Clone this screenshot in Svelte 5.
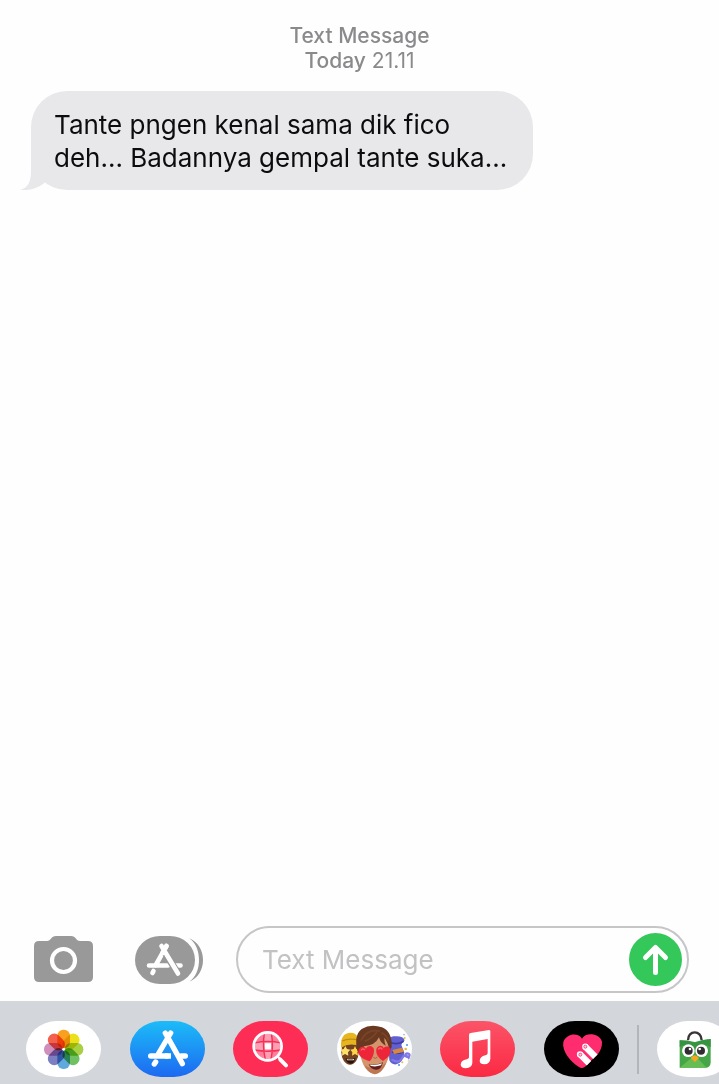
<script>
  let draft = $state('');

  const petals = ['#f9a01f', '#ece01a', '#a9d045', '#6fc163', '#5fa9dc', '#7d80c0', '#cf8fbd', '#f4604e'];
</script>

<main class="screen">
  <section class="thread" aria-label="Conversation">
    <header class="stamp">
      <div class="kind">Text Message</div>
      <div><span class="kind">Today</span> 21.11</div>
    </header>

    <div class="bubble">
      <svg class="tail" viewBox="0 0 40 40" aria-hidden="true">
        <path d="M11 0V21C11 32 8 38 0 40C9 41 18 38 23 34L40 20V0Z" fill="#e8e8ea" />
      </svg>
      <p>Tante pngen kenal sama dik fico<br />deh... Badannya gempal tante suka...</p>
    </div>
  </section>

  <form class="composer" onsubmit={(e) => e.preventDefault()}>
    <button type="button" class="tool" aria-label="Camera">
      <svg width="59" height="47" viewBox="0 0 59 47">
        <path
          d="M5 5H13C17 5 17 0 22 0H37C42 0 42 5 46 5H54Q59 5 59 10V41Q59 46 54 46H5Q0 46 0 41V10Q0 5 5 5Z"
          fill="#999"
        />
        <circle cx="29.5" cy="24.5" r="11.5" fill="none" stroke="#fff" stroke-width="4.2" />
      </svg>
    </button>

    <button type="button" class="tool" aria-label="Apps">
      <svg width="68" height="48" viewBox="0 0 68 48">
        <rect width="60" height="48" rx="25" ry="24" fill="#999" />
        <path d="M54 2C63 6 68 14 68 24S63 42 54 46C61 41 64 33 64 24S61 7 54 2Z" fill="#999" />
        <g fill="none" stroke="#fff" stroke-width="4.600" stroke-linecap="round">
          <path d="M31.500 10L20.500 29.500M14 29.500H33M41 29.500H45.500M18.500 35L17.500 37" />
          <path d="M29 15L43 37.500" stroke="#999" stroke-width="7" stroke-linecap="butt" />
          <path d="M31.500 10L27.500 17M26.500 10L43 37.500" />
        </g>
      </svg>
    </button>

    <div class="field">
      <input type="text" placeholder="Text Message" aria-label="Text Message" bind:value={draft} />
      <button type="submit" class="send" aria-label="Send">
        <svg width="53" height="53" viewBox="0 0 53 53">
          <circle cx="26.5" cy="26.5" r="26.500" fill="#34c759" />
          <path
            d="M26.500 39.500V15M16.500 24.500L26.500 14.500L36.500 24.500"
            fill="none"
            stroke="#fff"
            stroke-width="5"
            stroke-linecap="round"
            stroke-linejoin="round"
          />
        </svg>
      </button>
    </div>
  </form>

  <nav class="shelf" aria-label="Message apps">
    <div class="apps">
      <button class="app photos" aria-label="Photos">
        <svg viewBox="47 48 225 168">
          <g transform="translate(160 133)">
            {#each petals as color, i}
              <rect
                class="petal"
                x="-19"
                y="-59"
                width="38"
                height="56"
                rx="18"
                fill={color}
                transform="rotate({i * 45})"
              />
            {/each}
            <circle r="4" fill="#fff" />
          </g>
        </svg>
      </button>

      <button class="app store" aria-label="App Store">
        <svg viewBox="357 48 225 168">
          <g fill="none" stroke="#fff" stroke-width="16" stroke-linecap="round">
            <path d="M479 84L440 150M419 153H468M511 153H523M434 171L430 177" />
            <path d="M463 84L514 176" />
            <path d="M462 153H480" stroke-linecap="butt" />
          </g>
        </svg>
      </button>

      <button class="app images" aria-label="Image search">
        <svg viewBox="39 48 225 168">
          <circle cx="143" cy="124" r="41" fill="#ff9fb4" />
          <path d="M108 108H131V84H120ZM157 84V108H178L168 92ZM108 138H131V162H120ZM157 138H178L166 158L157 162Z" fill="#ff7e99" />
          <path d="M134 115H153V133H134Z" fill="#fff" />
          <path d="M133 84Q127 124 136 164M154 84Q161 124 153 164M104 113Q143 106 183 113M104 135Q143 142 183 135" fill="none" stroke="#f92e55" stroke-width="4.500" />
          <circle cx="143" cy="124" r="42" fill="none" stroke="#fff" stroke-width="8" />
          <path d="M173 155L182 163" stroke="#fff" stroke-width="7" />
          <path d="M181 164L198 181" stroke="#fff" stroke-width="12" stroke-linecap="round" />
        </svg>
      </button>

      <button class="app memoji" aria-label="Memoji">
        <svg viewBox="36 33 225 168">
          <ellipse cx="75" cy="126" rx="26" ry="38" fill="#734322" />
          <path d="M48 113Q45 68 78 68Q104 70 104 108L92 105Q69 100 48 113Z" fill="#e7b51f" />
          <path d="M51 93Q71 84 101 90" fill="none" stroke="#c28b12" stroke-width="4" />
          <path d="M61 108L66 117L76 119L69 127L70 137L60 132L51 137L52 127L46 119L56 117Z" fill="#ffe06a" />
          <path d="M90 108L94 117L102 119L97 127L99 137L90 132L81 137L82 127L76 119L86 117Z" fill="#ffd247" />
          <path d="M61 145Q76 152 91 143Q88 162 75 161Q65 160 61 145Z" fill="#28140d" />
          <path d="M65 147Q77 151 88 146L86 151H67Z" fill="#fff" />

          <path d="M190 103Q188 81 205 79Q235 76 239 91Q232 98 229 105L238 128Q234 158 214 163Q199 165 193 151Z" fill="#625fd0" />
          <path d="M193 96Q215 107 236 94M201 126Q219 133 235 125" fill="none" stroke="#3e3a9f" stroke-width="5" />
          <path d="M202 120L231 113L237 126L207 132Z" fill="#d7873e" />
          <path d="M202 150Q223 161 231 145T251 143Q258 130 246 130Q238 132 244 140" fill="none" stroke="#8278e6" stroke-width="7" stroke-linecap="round" />
          <g fill="#edbc35">
            <circle cx="239" cy="84" r="3" /><circle cx="242" cy="117" r="4" /><circle cx="232" cy="157" r="3" /><circle cx="250" cy="153" r="2" />
          </g>
          <g fill="#4b91df">
            <circle cx="246" cy="105" r="3" /><circle cx="222" cy="165" r="3" /><circle cx="237" cy="74" r="2" />
          </g>

          <path d="M104 83Q142 61 193 86Q199 132 184 160Q170 191 150 193Q127 190 114 162Q100 130 104 83Z" fill="#d4946c" />
          <path d="M118 166Q147 187 184 158Q170 190 150 193Q130 190 118 166Z" fill="#bd7853" />
          <path d="M97 122Q86 76 110 57Q137 40 171 52Q202 64 200 112L193 122Q190 98 178 83Q178 99 182 107Q166 99 162 82Q151 106 117 109Q110 117 110 132L101 128Z" fill="#683920" />
          <path d="M109 90Q124 57 163 63M121 93Q141 86 155 67M171 69Q186 77 190 91" fill="none" stroke="#7a4527" stroke-width="5" stroke-linecap="round" />
          <path d="M131 163Q151 168 174 157Q169 180 153 179Q138 179 131 163Z" fill="#60201b" />
          <path d="M134 164Q153 168 171 160L168 166Q153 171 138 168Z" fill="#fff" />
          <path d="M145 142Q151 149 157 141" fill="none" stroke="#ad6342" stroke-width="3" />
          <path d="M134 154C114 148 99 138 100 124C102 108 118 107 123 116C127 105 145 105 147 119C148 132 142 145 134 154Z" fill="#ee2538" />
          <path d="M174 153C160 143 152 133 154 118C157 105 172 104 176 114C184 104 199 111 197 124C196 138 184 146 174 153Z" fill="#ee2538" />
          <path d="M109 120Q113 114 118 119M161 117Q166 110 171 117" fill="none" stroke="#ff6872" stroke-width="4" stroke-linecap="round" />
        </svg>
      </button>

      <button class="app music" aria-label="Music">
        <svg viewBox="31 48 225 168">
          <path d="M118 89Q118 85 123 84L178 75Q182 75 182 79V161Q181 177 164 178Q151 178 150 168Q151 154 167 151Q174 150 174 145V102L128 110V174Q127 189 108 190Q94 189 93 179Q94 166 111 163Q118 162 118 157Z" fill="#fff" />
        </svg>
      </button>

      <button class="app touch" aria-label="Digital Touch">
        <svg viewBox="342 48 225 168">
          <path d="M456 101C445 81 409 85 400 111C395 139 421 169 448 187Q456 192 465 185L504 147Q517 129 516 110C507 83 466 82 456 101Z" fill="#ff2d70" />
          <g fill="none" stroke="#fff" stroke-width="19">
            <path d="M466 125L496 155M450 148L477 175" />
            <path d="M466 125H466.100M450 148H450.100" stroke-linecap="round" />
          </g>
          <circle cx="466" cy="125" r="4.500" fill="#ffd5e1" stroke="#ff2d70" stroke-width="2.500" />
          <circle cx="451" cy="149" r="4.500" fill="#ffd5e1" stroke="#ff2d70" stroke-width="2.500" />
        </svg>
      </button>
    </div>

    <span class="divider"></span>

    <button class="app shop" aria-label="Tokopedia">
      <svg viewBox="111 48 225 168">
        <path d="M204 106C203 74 245 74 245 106" fill="none" stroke="#3c3439" stroke-width="7" />
        <path d="M179 106Q202 106 225 111Q248 104 272 102V173Q271 188 256 188H179Z" fill="#45a549" />
        <path d="M179 188L224 151L260 188Z" fill="#66bd53" />
        <path d="M179 106Q202 106 225 113Q248 104 272 102V126Q247 111 225 129Q202 111 179 126Z" fill="#369342" />
        <circle cx="205" cy="137" r="19" fill="#fff" />
        <circle cx="245" cy="137" r="19" fill="#fff" />
        <circle cx="206" cy="137" r="12" fill="#302c32" />
        <circle cx="243" cy="137" r="12" fill="#302c32" />
        <circle cx="210" cy="132" r="4" fill="#fff" />
        <circle cx="239" cy="132" r="4" fill="#fff" />
        <path d="M212 159Q224 143 237 159L225 171Z" fill="#f7a823" />
      </svg>
    </button>
  </nav>
</main>

<style>
  :global(body) {
    background: #fefefe;
  }

  .screen {
    min-height: 100vh;
    display: flex;
    flex-direction: column;
    overflow: hidden;
    font-family: Inter, 'Liberation Sans', sans-serif;
    color: #0c0c0e;
  }

  button {
    padding: 0;
    border: 0;
    background: none;
    font: inherit;
    cursor: pointer;
  }

  svg {
    display: block;
  }

  .thread {
    flex: 1;
    padding: 23px 31px;
  }

  .stamp {
    margin-bottom: 18px;
    text-align: center;
    font-size: 21px;
    line-height: 25px;
    color: #8a8a8d;
  }

  .kind {
    font-weight: 500;
  }

  .bubble {
    position: relative;
    z-index: 0;
    width: fit-content;
    box-sizing: border-box;
    padding: 17px 26px 16px 23px;
    border-radius: 36px;
    background: #e8e8ea;
  }

  .bubble p {
    margin: 0;
    font-size: 26px;
    line-height: 33px;
  }

  .tail {
    position: absolute;
    z-index: -1;
    left: -11px;
    bottom: 0;
    width: 40px;
    height: 40px;
  }

  .composer {
    display: flex;
    align-items: center;
    padding: 0 30px 8px 34px;
  }

  .tool {
    margin-right: 42px;
  }

  .tool + .tool {
    margin-right: 33px;
  }

  .field {
    flex: 1;
    min-width: 0;
    box-sizing: border-box;
    display: flex;
    align-items: center;
    padding: 5px 5px 5px 24px;
    border: 2px solid #c6c6c9;
    border-radius: 34px;
  }

  input {
    flex: 1;
    min-width: 0;
    height: 53px;
    padding: 0;
    border: 0;
    outline: 0;
    background: none;
    font: inherit;
    font-size: 26px;
    color: inherit;
  }

  input::placeholder {
    color: #c2c2c4;
    opacity: 1;
  }

  .shelf {
    display: flex;
    align-items: center;
    padding: 20px 0 7px 26px;
    background: #d3d6db;
  }

  .apps {
    flex: 1;
    display: flex;
    justify-content: space-between;
  }

  .app {
    flex: none;
    width: 75px;
    height: 56px;
    border-radius: 31px / 28px;
    background: #fff;
    overflow: hidden;
  }

  .petal {
    mix-blend-mode: multiply;
  }

  .store {
    background: linear-gradient(#1cbcf8, #1d69f1);
  }

  .images {
    background: #fd2d55;
  }

  .music {
    background: linear-gradient(#fb5468, #fb2943);
  }

  .touch {
    background: #000;
  }

  .divider {
    width: 2px;
    height: 49px;
    margin: 0 18px;
    background: #b2b5ba;
  }

  .shop {
    margin-right: -13px;
  }
</style>
